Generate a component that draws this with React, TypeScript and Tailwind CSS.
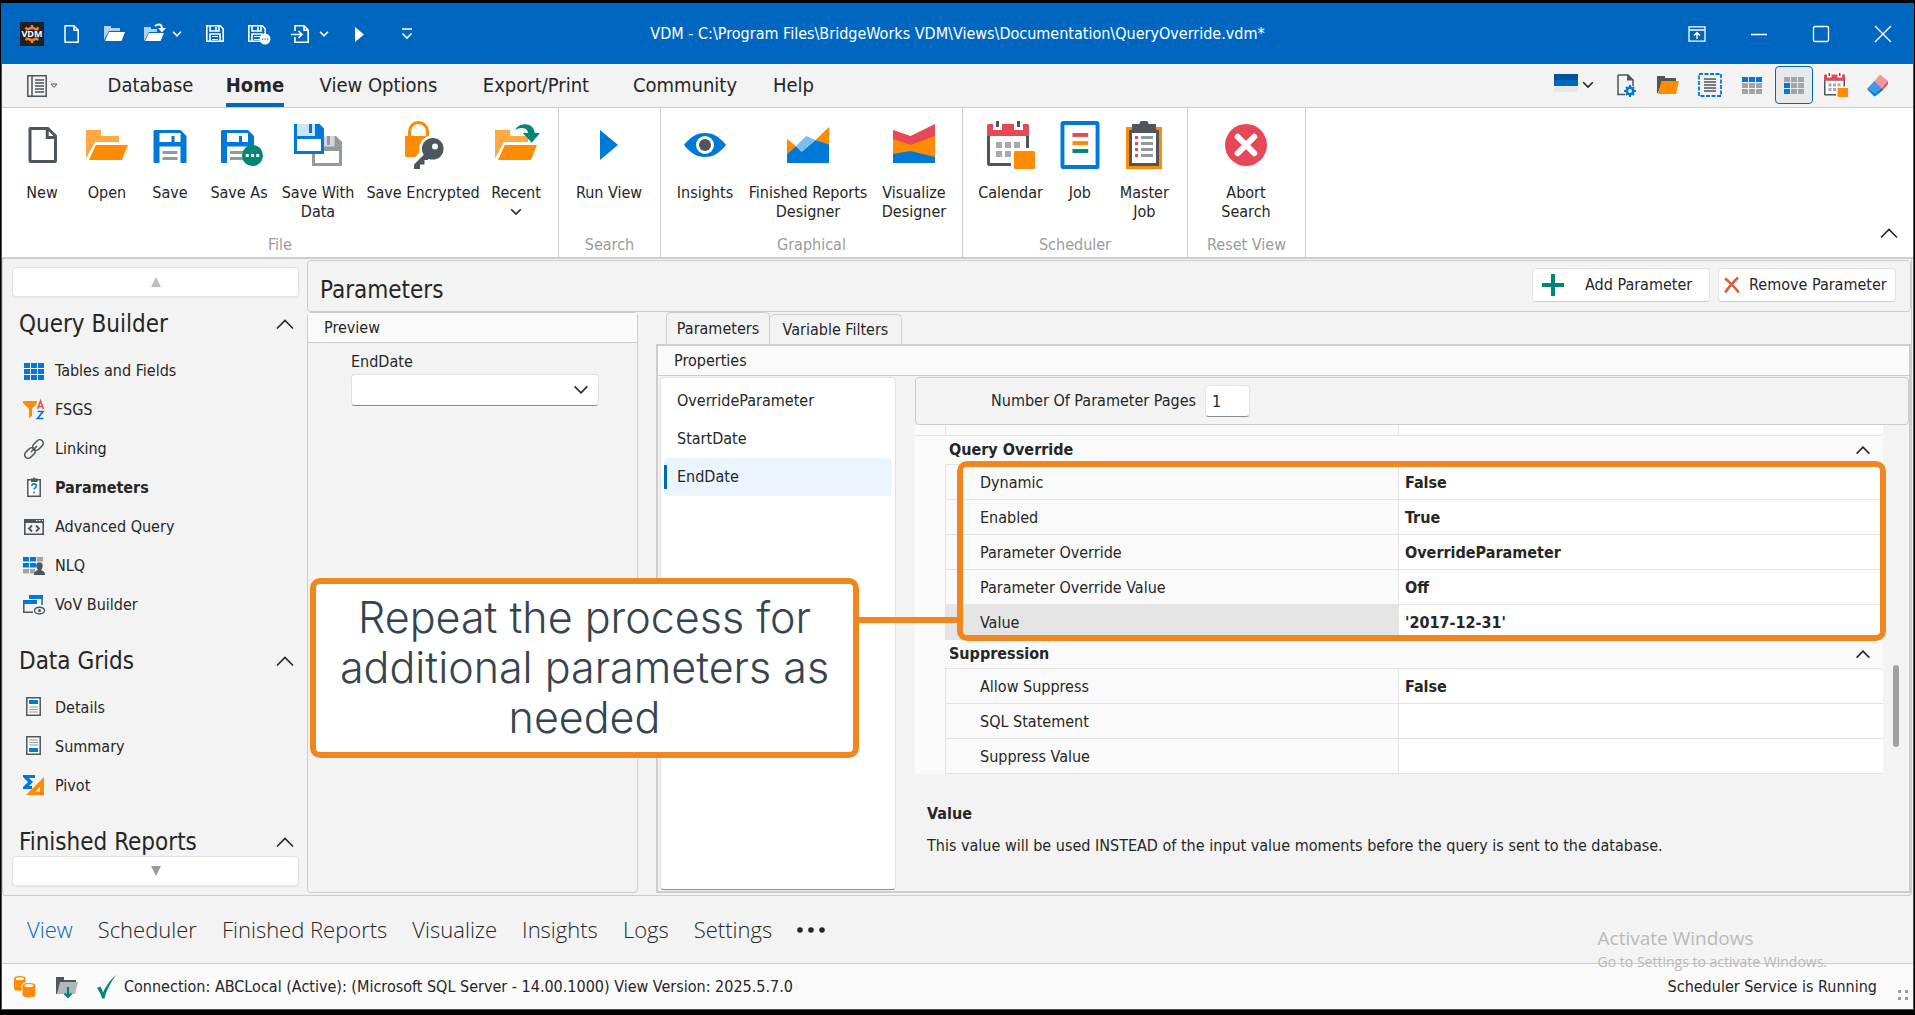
import type { ReactNode } from 'react';

interface IconProps {
    children: ReactNode,
    size?: string,
    box?: number
};

interface RibbonItem {
    label: string,
    icon: ReactNode,
    width: string,
    menu?: boolean
};

interface RibbonGroup {
    title: string,
    className: string,
    items: RibbonItem[]
};

interface NavItem {
    label: string,
    icon: ReactNode,
    active?: boolean
};

interface PropertyRow {
    name: string,
    value: string,
    selected?: boolean
};

const Svg = ({ children, size = "size-6", box = 24 }: IconProps) => (
    <svg className={`${size} shrink-0`} viewBox={`0 0 ${box} ${box}`} fill="none" aria-hidden="true">
        {children}
    </svg>
);

const Big = ({ children }: { children: ReactNode }) => <Svg size="size-12" box={32}>{children}</Svg>;

const Chevron = ({ up = false, className = "w-5 h-3" }: { up?: boolean, className?: string }) => (
    <svg className={`${className} shrink-0`} viewBox="0 0 20 12" fill="none" stroke="currentColor" strokeWidth="1.6" aria-hidden="true">
        <path d={up ? "M2 10.500L10 2.500L18 10.500" : "M2 1.500L10 9.500L18 1.500"} vectorEffect="non-scaling-stroke" />
    </svg>
);

/* ---------- ribbon icons, 32 unit box ---------- */

const FolderShape = () => (
    <>
        <path d="M2 6h10v4h12v4H8L2 25z" fill="#ffa940" />
        <path d="M8.500 16H30L26 26H4z" fill="#ff8c00" />
    </>
);

const DiskShape = () => (
    <>
        <path d="M5 7a1 1 0 0 1 1-1h17l4 4v17a1 1 0 0 1-1 1H6a1 1 0 0 1-1-1z" fill="#0078d7" />
        <path d="M9 8h14v6H9zM9 17h14v11H9z" fill="#fff" />
        <path d="M17 10h2v4h-2z" fill="#0078d7" />
        <path d="M11 20h10v2H11zM11 24h10v2H11z" fill="#94999c" />
    </>
);

const NewIcon = () => (
    <Big>
        <path d="M8 5h12l5 5v16.500a.5.5 0 0 1-.5.5h-16a.5.5 0 0 1-.5-.5z" fill="#fff" stroke="#4d565c" strokeWidth="2" strokeLinejoin="round" />
        <path d="M19.500 5.500V11H25" stroke="#4d565c" strokeWidth="2" />
    </Big>
);

const OpenIcon = () => <Big><FolderShape /></Big>;

const SaveIcon = () => <Big><DiskShape /></Big>;

const SaveAsIcon = () => (
    <Big>
        <g transform="translate(-1 0)"><DiskShape /></g>
        <circle cx="25" cy="23" r="7" fill="#008675" />
        <path d="M20.500 22h2v2h-2zM24 22h2v2h-2zM27.500 22h2v2h-2z" fill="#fff" />
    </Big>
);

const SaveWithDataIcon = () => (
    <Big>
        <path d="M12 10h16l4 4v16H12z" fill="#94999c" />
        <path d="M16 10h11v7H16z" fill="#d5d8da" />
        <path d="M22 10h2v6h-2z" fill="#94999c" />
        <path d="M14 20h16v8H14z" fill="#fff" />
        <path d="M0 2h17l3 3v17H0z" fill="#0078d7" />
        <path d="M2 2h12v8H2z" fill="#cce4f7" />
        <path d="M10 2h2v6h-2z" fill="#0078d7" />
        <path d="M2 12h16v8H2z" fill="#fff" />
    </Big>
);

const EncryptedIcon = () => (
    <Big>
        <path d="M7 11V7a6 6 0 0 1 12 0v4" stroke="#ff8c00" strokeWidth="2" />
        <path d="M4 10h16v14H5a1 1 0 0 1-1-1z" fill="#ff8c00" />
        <circle cx="22.500" cy="18.500" r="9" fill="#fff" />
        <path d="M17 22l-9 9" stroke="#fff" strokeWidth="6" />
        <circle cx="22.500" cy="18.500" r="7.200" fill="#4d565c" />
        <path d="M19 20l-9 9v3h4v-3h3v-3h2l4-3z" fill="#4d565c" />
        <circle cx="24" cy="17" r="2" fill="#fff" />
    </Big>
);

const RecentIcon = () => (
    <Big>
        <FolderShape />
        <path d="M16 5c4-4 11-3 11 4" stroke="#fff" strokeWidth="5" />
        <path d="M15.500 6C18 .5 28 .5 28.500 8H32l-5.500 6.500L20.500 8H24c0-3.500-5-4.500-8.500-2z" fill="#008675" />
    </Big>
);

const RunIcon = () => <Big><path d="M10 6L22 16L10 26z" fill="#0078d7" /></Big>;

const InsightsIcon = () => (
    <Big>
        <path d="M2 16C6 11 10 8 16 8s10 3 14 8c-4 5-8 8-14 8S6 21 2 16z" fill="#0078d7" />
        <circle cx="16" cy="16" r="6" fill="#fff" />
        <circle cx="16" cy="16" r="4" fill="#4d565c" />
    </Big>
);

const ReportsIcon = () => (
    <Big>
        <path d="M2 12l6 4.600L2 22zM21 12.600L30 4v12z" fill="#ff8c00" />
        <path d="M2 22l6-5.400l3.800 3.900L21 12.600l9 3V28H2z" fill="#0078d7" />
        <path d="M8 16.600l6.800-6.600l6.200 2.600l-9.200 7.900z" fill="#80bceb" />
    </Big>
);

const VisualizeIcon = () => (
    <Big>
        <path d="M2 6l11.700 4L30 2v9L13.700 17L2 13z" fill="#e74856" />
        <path d="M2 12l11.700 4L30 10v15H2z" fill="#ff8c00" />
        <path d="M2 22l11.700-2L30 24v4H2z" fill="#0078d7" />
    </Big>
);

const CalendarShape = () => (
    <>
        <path d="M1 9v19.500a.5.5 0 0 0 .5.500H27V9z" fill="#fff" stroke="#4d565c" strokeWidth="2" />
        <path d="M0 3a1 1 0 0 1 1-1h26a1 1 0 0 1 1 1v7H0z" fill="#e74856" />
        <path d="M4 0h6v6H4zM18 0h6v6h-6z" fill="#fff" />
        <path d="M6 0h2v4H6zM20 0h2v4h-2z" fill="#4d565c" />
        <path d="M6 14h4v4H6zM12 14h4v4h-4zM18 14h4v4h-4zM6 20h4v4H6zM12 20h4v4h-4z" fill="#a6aaad" />
        <path d="M16 18h16v14H16z" fill="#fff" />
        <rect x="18" y="20" width="14" height="12" rx=".8" fill="#ff8c00" />
    </>
);

const CalendarIcon = () => <Big><CalendarShape /></Big>;

const JobIcon = () => (
    <Big>
        <rect x="4.300" y="1.300" width="23.400" height="29.400" rx=".6" fill="#fff" stroke="#0078d7" strokeWidth="2.600" />
        <path d="M11 8h10.500v2.600H11z" fill="#e74856" />
        <path d="M11 13.400h10.500V16H11z" fill="#ff8c00" />
        <path d="M11 18.700h10.500v2.600H11z" fill="#008675" />
    </Big>
);

const MasterJobIcon = () => (
    <Big>
        <path d="M4 4h24v28H4z" fill="#ff8c00" />
        <path d="M7 7h18v22H7z" fill="#fff" stroke="#4d565c" strokeWidth="2" />
        <path d="M8 2h5a3 3 0 0 1 6 0h5v6H8z" fill="#4d565c" />
        <path d="M10 10h2v2h-2zM10 14h2v2h-2zM10 18h2v2h-2zM10 22h2v2h-2z" fill="#e74856" />
        <path d="M14 10h8v2h-8zM14 14h8v2h-8zM14 18h8v2h-8zM14 22h8v2h-8z" fill="#94999c" />
    </Big>
);

const AbortIcon = () => (
    <Big>
        <circle cx="16" cy="16" r="14" fill="#e74856" />
        <path d="M10.500 10.500l11 11M21.500 10.500l-11 11" stroke="#fff" strokeWidth="4" strokeLinecap="round" />
    </Big>
);

/* ---------- title bar icons ---------- */

const LogoIcon = () => (
    <svg className="size-6" viewBox="0 0 24 24" aria-hidden="true">
        <path d="M0 0h24v24H0z" fill="#20202c" />
        <circle cx="12" cy="12" r="6" fill="none" stroke="#f0841e" strokeWidth="2.500" />
        <path d="M12 3v18M5.500 5.500l13 13M18.500 5.500l-13 13" stroke="#f0841e" strokeWidth="2.500" strokeDasharray="3 12 3" />
        <path d="M1 8.500h22v7H1z" fill="#20202c" />
        <text x="12" y="15" fontSize="9" fontWeight="700" textAnchor="middle" fill="#fff" fontFamily="Open Sans, sans-serif">VDM</text>
    </svg>
);

const WhitePage = () => <Svg><path d="M5 3.800h9l4.200 4.200v12.200H5zM14 4v4.200h4" stroke="#fff" strokeWidth="1.500" strokeLinejoin="round" /></Svg>;

const WhiteFolder = () => (
    <Svg>
        <path d="M2 4h7v2h9v3H7L2 18z" fill="#b3d1ec" />
        <path d="M7 10h16l-3.500 9H3z" fill="#fff" />
    </Svg>
);

const WhiteRecent = () => (
    <Svg>
        <path d="M2 5h7v2h6v3H7L2 19z" fill="#b3d1ec" />
        <path d="M7 11h15l-3.500 8H3z" fill="#fff" />
        <path d="M13 4c4-3 7-1.500 7 3" stroke="#fff" strokeWidth="2" />
        <path d="M16 6h8l-4 4.500z" fill="#fff" />
    </Svg>
);

const WhiteDiskShape = () => (
    <>
        <path d="M3.800 3.800h13.400l3 3v12.400H3.800z" stroke="#fff" strokeWidth="1.600" />
        <path d="M7 4v5h9V4M13 5v4M7 19v-7h10v7" stroke="#fff" strokeWidth="1.600" />
        <path d="M9 14.500h6M9 17.500h6" stroke="#fff" strokeWidth="1.200" />
    </>
);

const WhiteDisk = () => <Svg><WhiteDiskShape /></Svg>;

const WhiteSaveAs = () => (
    <Svg>
        <g transform="translate(-2 0)"><WhiteDiskShape /></g>
        <circle cx="18" cy="17" r="5.500" fill="#fff" />
        <path d="M15 16.500h1.200v1.200H15zM17.500 16.500h1.200v1.200h-1.200zM20 16.500h1.200v1.200H20z" fill="#0067c0" />
    </Svg>
);

const WhiteImport = () => (
    <Svg>
        <path d="M6 9V3.800h9l4.200 4.200v12.200H6V15M15 4v4.200h4" stroke="#fff" strokeWidth="1.600" />
        <path d="M2 12.500h10M9.500 9l3.500 3.500L9.500 16" stroke="#fff" strokeWidth="1.600" />
    </Svg>
);

const WhitePlay = () => <Svg><path d="M8 5l9 7.500L8 20z" fill="#fff" /></Svg>;

const Customize = () => <Svg><path d="M7 7h10M7.500 11.500l4.500 4.500l4.500-4.500" stroke="#fff" strokeWidth="1.600" /></Svg>;

/* ---------- quick tools on the tab row ---------- */

const DocGear = () => (
    <Svg>
        <path d="M4 2h10l5 5v6M11 21.500H4V2" stroke="#4d565c" strokeWidth="1.500" />
        <path d="M13 1.500v6h6z" fill="#4d565c" />
        <circle cx="16" cy="18" r="3.200" stroke="#0078d7" strokeWidth="2.600" />
        <path d="M16 12v12M10 18h12M12 14l8 8M20 14l-8 8" stroke="#0078d7" strokeWidth="2" strokeDasharray="2.500 7 2.500" />
    </Svg>
);

const DarkFolder = () => (
    <Svg>
        <path d="M1 3h8v2h11v4H6L2 20H1z" fill="#4d565c" />
        <path d="M5.500 8H23l-3 13H2z" fill="#ff8c00" />
    </Svg>
);

const SelectList = () => (
    <Svg>
        <rect x="1" y="1" width="22" height="22" stroke="#0078d7" strokeWidth="1.800" strokeDasharray="4 1.500" />
        <path d="M6 6h12M6 9h12M6 12h12M6 15h12M6 18h12" stroke="#4d565c" strokeWidth="1.400" />
    </Svg>
);

const cells = [
    [2, 4], [9, 4], [16, 4],
    [2, 10], [9, 10], [16, 10],
    [2, 16], [9, 16], [16, 16]
];

const GridIcon = ({ blue }: { blue: number[] }) => (
    <Svg>
        {cells.map(([x, y], index) => (
            <rect key={`cell-${index}`} x={x} y={y} width="6" height="5" fill={blue.includes(index) ? "#0078d7" : "#a0a5a8"} />
        ))}
    </Svg>
);

const Eraser = () => (
    <Svg>
        <path d="M8.500 8L14 1.500L22 8L16 16z" fill="#f098a0" />
        <path d="M22 8v3L16 18l-1-1.500z" fill="#e74856" />
        <path d="M1.500 15L8.500 8l7.500 7.500L9 22z" fill="#429ae0" />
        <path d="M9 21l7-6v3l-7.500 5.500L1.500 16.500V15z" fill="#0078d7" />
    </Svg>
);

/* ---------- side bar icons ---------- */

const FilterSort = () => (
    <Svg>
        <path d="M1 3h14v2l-5 6v7l-3 2.500V11L1 5z" fill="#ff8c00" />
        <path d="M15.500 11L18.500 3l3 8M16.500 8.500h4" stroke="#e74856" strokeWidth="1.500" />
        <path d="M15.500 13.500h5.500l-5.500 7h6" stroke="#0078d7" strokeWidth="1.700" />
    </Svg>
);

const LinkIcon = () => (
    <Svg>
        <g stroke="#4d565c" strokeWidth="1.600">
            <rect x="10" y="4.500" width="12" height="7" rx="3.500" transform="rotate(-45 16 8)" />
            <rect x="2" y="12.500" width="12" height="7" rx="3.500" transform="rotate(-45 8 16)" />
            <path d="M9 15l6-6" />
        </g>
    </Svg>
);

const ClipQuestion = () => (
    <Svg>
        <path d="M5.800 3.800h12.400v16.400H5.800z" fill="#fff" stroke="#4d565c" strokeWidth="1.500" />
        <path d="M9 2.500h2a1 1 0 0 1 2 0h2.500v3.500H9z" fill="#4d565c" />
        <path d="M9.800 10c0-3 4.600-2.600 4.600 0 0 1.600-2.300 1.600-2.300 3.600M12.100 15.500v1.800" stroke="#0078d7" strokeWidth="1.600" />
    </Svg>
);

const CodeWindow = () => (
    <Svg>
        <path d="M2.800 4.800h18.400v14.400H2.800z" stroke="#4d565c" strokeWidth="1.600" />
        <path d="M2 4h20v4H2z" fill="#4d565c" />
        <path d="M14 5.500h1.500M17 5.500h1.500M20 5.500h1" stroke="#fff" strokeWidth="1" />
        <path d="M10 10.500L7 13.500l3 3M14 10.500l3 3l-3 3" stroke="#4d565c" strokeWidth="1.800" />
    </Svg>
);

const NlqIcon = () => (
    <Svg>
        <path d="M1 3h6v4.500H1zM8 3h6v4.500H8zM1 9h6v4.500H1zM8 9h6v4.500H8z" fill="#0078d7" />
        <path d="M15 3h6v4.500h-6zM1 15h6v4.500H1zM8 15h5v4.500H8zM15 9h2v3h-2z" fill="#a0a5a8" />
        <path d="M17.500 8.500c3 0 3.500 2 3 4.500-.3 1.500-.7 2-1.500 2.700 1 1.300 4 .8 4 5.300H12c0-4.500 3-4 4-5.300-.8-.7-1.200-1.200-1.500-2.700-.5-2.500 0-4.500 3-4.500z" fill="#4d565c" />
    </Svg>
);

const VovIcon = () => (
    <Svg>
        <path d="M7 2h14v4H7z" fill="#0078d7" />
        <path d="M20 6v6" stroke="#4d565c" strokeWidth="1.500" />
        <path d="M1 7h14v4H1z" fill="#0078d7" />
        <path d="M1.800 11v8.200H11" stroke="#4d565c" strokeWidth="1.500" />
        <ellipse cx="17.500" cy="17.500" rx="5" ry="3.300" stroke="#4d565c" strokeWidth="1.400" />
        <circle cx="17.500" cy="17.500" r="1.500" fill="#4d565c" />
    </Svg>
);

const PageIcon = ({ bottom = false }: { bottom?: boolean }) => (
    <Svg>
        <path d="M4.800 1.800h13.400v17.400H4.800z" fill="#fff" stroke="#4d565c" strokeWidth="1.500" />
        <path d={bottom ? "M7 13h9v4H7z" : "M7 4h9v4H7z"} fill="#0078d7" />
        <path d={bottom ? "M7 5h9M7 7.500h9M7 10h9" : "M7 11h9M7 13.500h9M7 16h9"} stroke="#94999c" strokeWidth="1.200" />
    </Svg>
);

const PivotIcon = () => (
    <Svg>
        <path d="M1 1h12v3H7l4 4l-4 4h3v3H1v-2l5-5L1 3z" fill="#0078d7" />
        <path d="M22 3v18H4zM18 13l-4.500 4.500H18z" fill="#ff8c00" fillRule="evenodd" />
    </Svg>
);

/* ---------- data ---------- */

const ribbon: RibbonGroup[] = [
    {
        title: "File", className: "w-[557px] px-2", items: [
            { label: "New", icon: <NewIcon />, width: "w-16" },
            { label: "Open", icon: <OpenIcon />, width: "w-[66px]" },
            { label: "Save", icon: <SaveIcon />, width: "w-[60px]" },
            { label: "Save As", icon: <SaveAsIcon />, width: "w-[78px]" },
            { label: "Save With Data", icon: <SaveWithDataIcon />, width: "w-20" },
            { label: "Save Encrypted", icon: <EncryptedIcon />, width: "w-[130px]" },
            { label: "Recent", icon: <RecentIcon />, width: "w-14", menu: true }
        ]
    },
    {
        title: "Search", className: "w-[102px]", items: [
            { label: "Run View", icon: <RunIcon />, width: "w-[100px]" }
        ]
    },
    {
        title: "Graphical", className: "w-[302px] px-1", items: [
            { label: "Insights", icon: <InsightsIcon />, width: "w-20" },
            { label: "Finished Reports Designer", icon: <ReportsIcon />, width: "w-[126px]" },
            { label: "Visualize Designer", icon: <VisualizeIcon />, width: "w-[86px]" }
        ]
    },
    {
        title: "Scheduler", className: "w-[225px] px-1", items: [
            { label: "Calendar", icon: <CalendarIcon />, width: "w-[88px]" },
            { label: "Job", icon: <JobIcon />, width: "w-[52px]" },
            { label: "Master Job", icon: <MasterJobIcon />, width: "w-[78px] px-2" }
        ]
    },
    {
        title: "Reset View", className: "w-[118px]", items: [
            { label: "Abort Search", icon: <AbortIcon />, width: "w-[116px] px-6" }
        ]
    }
];

const tabs = [
    { label: "Database", width: "w-[109px]" },
    { label: "Home", width: "w-[100px]", active: true },
    { label: "View Options", width: "w-[147px]" },
    { label: "Export/Print", width: "w-[168px]" },
    { label: "Community", width: "w-[130px]" },
    { label: "Help", width: "w-[87px]" }
];

const queryBuilder: NavItem[] = [
    { label: "Tables and Fields", icon: <GridIcon blue={[0, 1, 2, 3, 4, 5, 6, 7, 8]} /> },
    { label: "FSGS", icon: <FilterSort /> },
    { label: "Linking", icon: <LinkIcon /> },
    { label: "Parameters", icon: <ClipQuestion />, active: true },
    { label: "Advanced Query", icon: <CodeWindow /> },
    { label: "NLQ", icon: <NlqIcon /> },
    { label: "VoV Builder", icon: <VovIcon /> }
];

const dataGrids: NavItem[] = [
    { label: "Details", icon: <PageIcon /> },
    { label: "Summary", icon: <PageIcon bottom /> },
    { label: "Pivot", icon: <PivotIcon /> }
];

const overrideRows: PropertyRow[] = [
    { name: "Dynamic", value: "False" },
    { name: "Enabled", value: "True" },
    { name: "Parameter Override", value: "OverrideParameter" },
    { name: "Parameter Override Value", value: "Off" },
    { name: "Value", value: "'2017-12-31'", selected: true }
];

const suppressionRows: PropertyRow[] = [
    { name: "Allow Suppress", value: "False" },
    { name: "SQL Statement", value: "" },
    { name: "Suppress Value", value: "" }
];

const parameters = ["OverrideParameter", "StartDate", "EndDate"];

const modules = ["View", "Scheduler", "Finished Reports", "Visualize", "Insights", "Logs", "Settings"];

/* ---------- sections ---------- */

function TitleBar() {
    return(
        <header className="flex h-[60px] shrink-0 items-center bg-[#0067c0] text-white">
            <div className="flex flex-1 items-center pl-[18px]">
                <LogoIcon />
                <button aria-label="New" className="ml-4"><WhitePage /></button>
                <button aria-label="Open" className="ml-[18px]"><WhiteFolder /></button>
                <button aria-label="Recent" className="ml-4 flex items-center gap-1.5"><WhiteRecent /><Chevron className="w-2.5 h-2" /></button>
                <button aria-label="Save" className="ml-[21px]"><WhiteDisk /></button>
                <button aria-label="Save As" className="ml-5"><WhiteSaveAs /></button>
                <button aria-label="Import" className="ml-[18px] flex items-center gap-1.5"><WhiteImport /><Chevron className="w-2.5 h-2" /></button>
                <button aria-label="Run" className="ml-[18px]"><WhitePlay /></button>
                <button aria-label="Customize" className="ml-6"><Customize /></button>
            </div>
            <h1 className="text-[16px]">VDM - C:\Program Files\BridgeWorks VDM\Views\Documentation\QueryOverride.vdm*</h1>
            <div className="flex flex-1 items-center justify-end gap-[38px] pr-[18px]">
                <button aria-label="Ribbon display">
                    <Svg><path d="M4 4.800h16v14.400H4zM4 8h16M12 17v-6M9 13.500L12 10.500l3 3" stroke="#fff" strokeWidth="1.300" /></Svg>
                </button>
                <button aria-label="Minimize"><Svg><path d="M4 12.500h16" stroke="#fff" strokeWidth="1.500" /></Svg></button>
                <button aria-label="Maximize"><Svg><rect x="4.500" y="4.500" width="15" height="15" rx="1.500" stroke="#fff" strokeWidth="1.300" /></Svg></button>
                <button aria-label="Close"><Svg><path d="M4 4l16 16M20 4L4 20" stroke="#fff" strokeWidth="1.400" /></Svg></button>
            </div>
        </header>
    );
};

function TabRow() {
    return(
        <nav className="flex h-11 shrink-0 items-center border-b border-[#cdcdcd] bg-[#f3f3f3]">
            <button aria-label="File menu" className="ml-6 mr-[38px] flex w-8 items-center">
                <Svg>
                    <path d="M1.800 1.800h18.400v20.400H1.800zM6 2v20" stroke="#4d565c" strokeWidth="1.500" />
                    <path d="M9 6h9M9 9h9M9 12h9M9 15h9M9 18h9" stroke="#4d565c" strokeWidth="1.500" />
                </Svg>
                <svg className="h-1.5 w-2 shrink-0" viewBox="0 0 8 6" fill="none" aria-hidden="true"><path d="M1 1h6L4 4.500z" stroke="#4d565c" /></svg>
            </button>
            {tabs.map((tab, index) => (
                <button key={`tab-${index}`} className={`${tab.width} flex h-full items-end justify-center text-[20px] leading-9`}>
                    <span className={tab.active ? "border-b-4 border-[#0067c0] font-bold" : "border-b-4 border-transparent"}>{tab.label}</span>
                </button>
            ))}
            <div className="flex flex-1 items-center justify-end pb-0.5 pr-[23px]">
                <button aria-label="Theme" className="mr-5 flex items-center gap-1">
                    <Svg><path d="M0 1h24v6H0z" fill="#00539c" /><path d="M0 7h24v6H0z" fill="#0067c0" /><path d="M0 13h24v6H0z" fill="#e8e8e8" /></Svg>
                    <Chevron className="w-3 h-2" />
                </button>
                <div className="flex items-center gap-[18px]">
                    <button aria-label="View settings"><DocGear /></button>
                    <button aria-label="Folder"><DarkFolder /></button>
                    <button aria-label="Select all"><SelectList /></button>
                    <button aria-label="Header grid"><GridIcon blue={[0, 1, 2]} /></button>
                    <button aria-label="Column grid" className="-mx-[7px] flex h-[38px] w-[38px] items-center justify-center rounded-[4px] border border-[#0067c0] bg-[#e9e9e9]">
                        <GridIcon blue={[3, 6]} />
                    </button>
                    <button aria-label="Calendar"><Svg box={32}><CalendarShape /></Svg></button>
                    <button aria-label="Clear"><Eraser /></button>
                </div>
            </div>
        </nav>
    );
};

function Ribbon() {
    return(
        <section className="flex h-[151px] shrink-0 border-b-2 border-[#cdcdcd] bg-white">
            {ribbon.map((group, index) => (
                <div key={`group-${index}`} className={`${group.className} flex shrink-0 flex-col border-r border-[#cdcdcd] pt-[13px]`}>
                    <div className="flex flex-1 items-start">
                        {group.items.map((item, itemIndex) => (
                            <button key={`item-${itemIndex}`} className={`${item.width} flex flex-col items-center gap-[14px] text-[16px] leading-[19px]`}>
                                {item.icon}
                                <span className="flex flex-col items-center gap-1.5">
                                    {item.label}
                                    {item.menu && <Chevron className="w-3 h-2" />}
                                </span>
                            </button>
                        ))}
                    </div>
                    <p className="pb-0.5 text-center text-[16px] leading-5 text-[#9b9b9b]">{group.title}</p>
                </div>
            ))}
            <div className="flex flex-1 items-end justify-end pb-[18px] pr-[14px]">
                <button aria-label="Collapse ribbon"><Chevron up className="h-3 w-5" /></button>
            </div>
        </section>
    );
};

function NavSection({ title, items }: { title: string, items: NavItem[] }) {
    return(
        <div className="mb-[11px]">
            <button className="flex h-[53px] w-full items-center justify-between pb-0.5 pl-4 pr-3 text-[24px] leading-7">
                {title}
                <Chevron up />
            </button>
            {items.map((item, index) => (
                <a key={`nav-${index}`} href="#" className="flex h-[39px] items-center gap-[9px] pl-[19px] text-[16px]">
                    {item.icon}
                    <span className={item.active ? "font-bold" : ""}>{item.label}</span>
                </a>
            ))}
        </div>
    );
};

function SideBar() {
    return(
        <aside className="flex w-[304px] shrink-0 flex-col pb-[9px] pt-2">
            <button aria-label="Scroll up" className="ml-[9px] mr-2 flex h-[30px] shrink-0 items-center justify-center rounded-[4px] border border-[#e2e2e2] bg-white shadow-xs">
                <svg className="h-2.5 w-2.5" viewBox="0 0 10 10" aria-hidden="true"><path d="M5 0l5 10H0z" fill="#bdbdbd" /></svg>
            </button>
            <div className="min-h-0 flex-1 overflow-hidden pt-px">
                <NavSection title="Query Builder" items={queryBuilder} />
                <NavSection title="Data Grids" items={dataGrids} />
                <NavSection title="Finished Reports" items={[]} />
            </div>
            <button aria-label="Scroll down" className="ml-[9px] mr-2 flex h-[30px] shrink-0 items-center justify-center rounded-[4px] border border-[#e2e2e2] bg-white shadow-xs">
                <svg className="h-2.5 w-2.5" viewBox="0 0 10 10" aria-hidden="true"><path d="M5 10L0 0h10z" fill="#9b9b9b" /></svg>
            </button>
        </aside>
    );
};

function Preview() {
    return(
        <section className="w-[331px] shrink-0 rounded-[4px] border border-[#cdcdcd]">
            <h3 className="h-[30px] border-b border-[#cdcdcd] bg-[#fafafa] pl-4 text-[16px] leading-[30px]">Preview</h3>
            <div className="pl-[43px] pr-[38px] pt-[7px]">
                <label htmlFor="end-date" className="block text-[16px] leading-6">EndDate</label>
                <div className="relative">
                    <select id="end-date" className="block h-8 w-full appearance-none rounded-[4px] border border-[#e2e2e2] border-b-[#8a8a8a] bg-white px-2">
                        <option></option>
                    </select>
                    <div className="pointer-events-none absolute inset-y-0 right-2.5 flex items-center"><Chevron className="h-2.5 w-4" /></div>
                </div>
            </div>
        </section>
    );
};

function Callout() {
    return(
        <div className="pointer-events-none absolute -bottom-px -right-[3px] -top-1 left-[11px] rounded-[10px] border-[6px] border-[#ef861f]">
            <div className="absolute right-full top-[111px] flex">
                <p className="h-[180px] w-[549px] rounded-[10px] border-[6px] border-[#ef861f] bg-white px-3 pt-2 text-center font-['Inter',sans-serif] text-[43px] font-light leading-[50px] text-[#36444f]">
                    Repeat the process for additional parameters as needed
                </p>
                <div className="mt-[39px] h-1.5 w-[104px] bg-[#ef861f]" />
            </div>
        </div>
    );
};

function PropertyGroup({ title, rows, children }: { title: string, rows: PropertyRow[], children?: ReactNode }) {
    return(
        <div>
            <button className="flex h-7 w-full items-center justify-between pl-[34px] pr-3 text-[16px] font-bold">
                {title}
                <Chevron up className="h-2.5 w-4" />
            </button>
            <div className="relative ml-[30px] border-l border-t border-[#e4e4e4]">
                <table className="w-full border-separate border-spacing-0 text-[16px]">
                    <tbody>
                        {rows.map((row, index) => (
                            <tr key={`row-${index}`} className="h-[35px]">
                                <th scope="row" className={`w-[452px] border-b border-[#e4e4e4] pl-[34px] pt-0.5 text-left font-normal ${row.selected ? "bg-[#e5e5e5]" : ""}`}>{row.name}</th>
                                <td className="border-b border-l border-[#e4e4e4] bg-white pl-1.5 pt-0.5 font-bold">{row.value}</td>
                            </tr>
                        ))}
                    </tbody>
                </table>
                {children}
            </div>
        </div>
    );
};

function PropertyPanel() {
    return(
        <div className="ml-[19px] flex min-w-0 flex-1 flex-col pt-px">
            <div className="flex h-12 shrink-0 items-center rounded-[4px] border border-[#cdcdcd] pl-[75px]">
                <label htmlFor="pages" className="text-[16px] leading-6">Number Of Parameter Pages</label>
                <input id="pages" type="text" defaultValue="1" className="ml-[9px] h-8 w-[45px] rounded-[4px] border border-[#e2e2e2] border-b-[#8a8a8a] bg-white px-1.5 text-[16px]" />
            </div>
            <div className="flex">
                <div className="min-w-0 flex-1 bg-[#fafafa]">
                    <div className="flex h-[11px] border-b border-[#e4e4e4] pl-[30px]">
                        <div className="w-[453px] border-l border-[#e4e4e4]" />
                        <div className="flex-1 border-l border-[#e4e4e4] bg-white" />
                    </div>
                    <PropertyGroup title="Query Override" rows={overrideRows}><Callout /></PropertyGroup>
                    <PropertyGroup title="Suppression" rows={suppressionRows} />
                </div>
                <div className="w-[26px] pl-2.5 pt-60">
                    <div className="h-[82px] w-1.5 rounded-full bg-[#a0a0a0]" />
                </div>
            </div>
            <div className="pl-3 pt-7 text-[16px] leading-6">
                <p className="font-bold">Value</p>
                <p className="mt-2">This value will be used INSTEAD of the input value moments before the query is sent to the database.</p>
            </div>
        </div>
    );
};

function ParameterTabs() {
    return(
        <section className="ml-[18px] flex min-w-0 flex-1 flex-col">
            <div className="flex h-8 shrink-0 items-end pl-[10px] text-[16px]">
                <button className="h-full w-[104px] rounded-t-[5px] border border-b-0 border-[#cdcdcd]">Parameters</button>
                <button className="h-[30px] w-[132px] rounded-t-[5px] border border-b-0 border-l-0 border-[#cdcdcd]">Variable Filters</button>
            </div>
            <div className="flex min-h-0 flex-1 flex-col border-2 border-[#cdcdcd]">
                <h3 className="h-[30px] shrink-0 border-b border-[#cdcdcd] bg-[#fafafa] pl-4 text-[16px] leading-[30px]">Properties</h3>
                <div className="flex min-h-0 flex-1 pl-0.5">
                    <ul className="my-px w-[236px] shrink-0 rounded-[4px] border border-[#e2e2e2] border-b-[#8a8a8a] bg-white px-[3px] pt-1 text-[16px]">
                        {parameters.map((name) => (
                            <li key={name}>
                                <button className={`flex h-[38px] w-full items-center gap-[10px] rounded-[4px] text-left ${name === "EndDate" ? "bg-[#ebf5ff]" : ""}`}>
                                    <span className={`h-6 w-[3px] ${name === "EndDate" ? "bg-[#0067c0]" : ""}`} />
                                    {name}
                                </button>
                            </li>
                        ))}
                    </ul>
                    <PropertyPanel />
                </div>
            </div>
        </section>
    );
};

function Workspace() {
    return(
        <main className="flex min-w-0 flex-1 flex-col pt-px pb-0.5">
            <div className="flex h-[52px] shrink-0 items-start justify-between rounded-[4px] border border-[#cdcdcd] pl-3 pr-[14px] pt-[7px]">
                <h2 className="pt-1 text-[24px] leading-9">Parameters</h2>
                <div className="flex gap-2 text-[16px]">
                    <button className="flex h-[34px] w-[178px] items-center gap-5 rounded-[4px] border border-[#e2e2e2] border-b-[#cdcdcd] bg-white pl-2">
                        <Svg><path d="M12 1v22M1 12h22" stroke="#008675" strokeWidth="4" /></Svg>
                        Add Parameter
                    </button>
                    <button className="flex h-[34px] w-[178px] items-center gap-2 rounded-[4px] border border-[#e2e2e2] border-b-[#cdcdcd] bg-white pl-1">
                        <Svg size="size-[18px]"><path d="M3 3c5 5 13 12 18 19M20 2C14 8 7 15 3 22" stroke="#d9603f" strokeWidth="3.500" /></Svg>
                        Remove Parameter
                    </button>
                </div>
            </div>
            <div className="flex min-h-0 flex-1">
                <Preview />
                <ParameterTabs />
            </div>
        </main>
    );
};

function ModuleBar() {
    return(
        <nav className="relative flex h-[68px] shrink-0 items-center gap-[25px] border-b border-[#cdcdcd] bg-[#f3f3f3] pl-[25px] font-['Open_Sans',sans-serif] text-[22px] font-light">
            {modules.map((name, index) => (
                <a key={`module-${index}`} href="#" className={index === 0 ? "text-[#0067c0]" : ""}>{name}</a>
            ))}
            <button aria-label="More">
                <svg className="h-2 w-7" viewBox="0 0 28 8" fill="#262626" aria-hidden="true"><circle cx="3" cy="4" r="2.800" /><circle cx="14" cy="4" r="2.800" /><circle cx="25" cy="4" r="2.800" /></svg>
            </button>
            <div className="pointer-events-none absolute right-[86px] top-7 z-10 font-normal text-[#b9b9b9]">
                <p className="text-[19px] leading-7">Activate Windows</p>
                <p className="text-[14px] leading-5">Go to Settings to activate Windows.</p>
            </div>
        </nav>
    );
};

function StatusBar() {
    return(
        <footer className="flex h-[45px] shrink-0 items-center bg-[#fafafa] pl-[11px] pr-1 text-[16px]">
            <Svg>
                <g fill="#ff8c00" stroke="#fafafa">
                    <path d="M.5 3.500C.5-.5 13-.5 13 3.500V14c0 3-12.500 3-12.500 0z" />
                    <path d="M9 10.500c0-4 14-4 14 0V20c0 4-14 4-14 0z" />
                </g>
                <ellipse cx="6.800" cy="3.800" rx="4" ry="1.500" fill="#fafafa" />
                <ellipse cx="16" cy="10.500" rx="4.500" ry="1.600" fill="#fafafa" />
            </Svg>
            <div className="ml-[18px]">
                <Svg>
                    <path d="M1 2h8v3h12v3H6L2 19H1z" fill="#4d565c" />
                    <path d="M5 7h18l-3 12H2z" fill="#b3b7ba" />
                    <path d="M13 12v10M9.500 18.500l3.500 3.500l3.500-3.500" stroke="#008675" strokeWidth="2.200" />
                </Svg>
            </div>
            <div className="ml-4 mr-[5px]"><Svg><path d="M2 13l3-1.500c1.500 1.500 2.500 4 3 6C11 11 16 4 21 0 15.500 8 11.500 15 9.500 23.500H7C6 20 4.500 16 2 13z" fill="#008675" /></Svg></div>
            <p>Connection: ABCLocal (Active): (Microsoft SQL Server - 14.00.1000) View Version: 2025.5.7.0</p>
            <p className="ml-auto mr-5">Scheduler Service is Running</p>
            <svg className="h-3 w-3 self-end mb-2" viewBox="0 0 12 12" fill="#9b9b9b" aria-hidden="true"><path d="M1 1h3v3H1zM8 1h3v3H8zM1 8h3v3H1zM8 8h3v3H8z" /></svg>
        </footer>
    );
};

function App() {
    return(
        <div className="h-screen min-w-[1400px] bg-black px-px pb-[5px] pt-[3px] font-['DejaVu_Sans_Condensed','Noto_Sans',sans-serif] text-[#262626]">
            <div className="flex h-full flex-col border border-[#0067c0] bg-[#f3f3f3]">
                <TitleBar />
                <TabRow />
                <Ribbon />
                <div className="mr-px flex min-h-0 flex-1 rounded-b-[4px] border-x border-b border-[#cdcdcd]">
                    <SideBar />
                    <Workspace />
                </div>
                <ModuleBar />
                <StatusBar />
            </div>
        </div>
    );
};

export default App;
